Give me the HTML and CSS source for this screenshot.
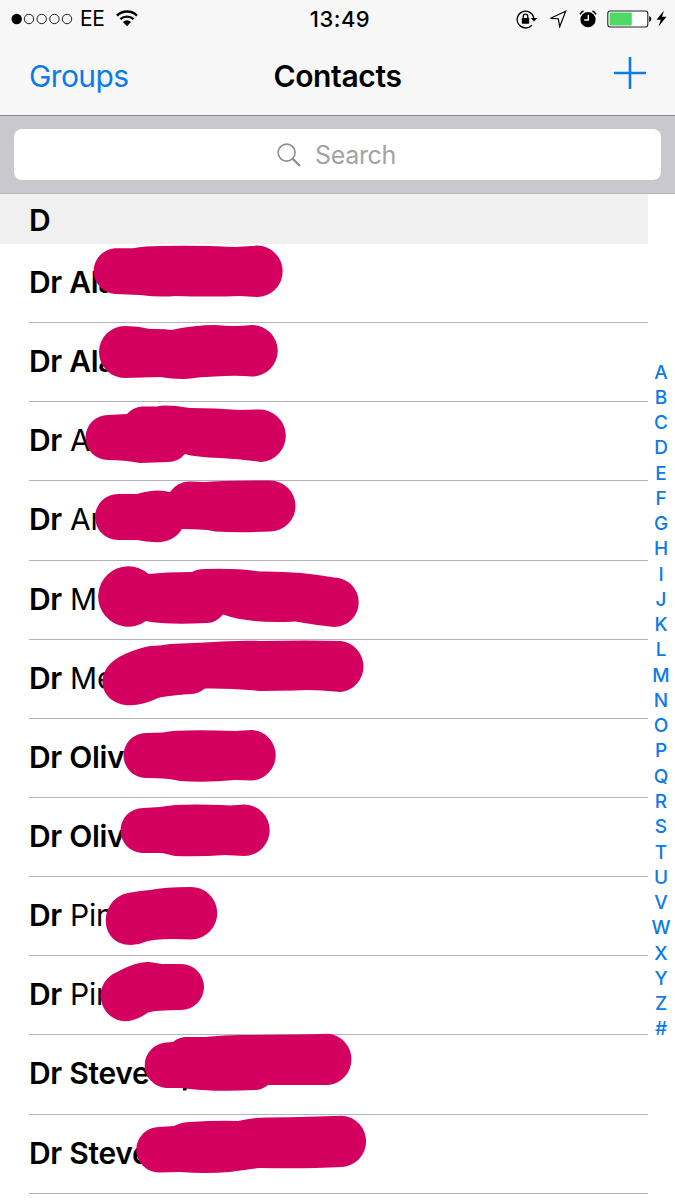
FILE: index.html
```html
<!DOCTYPE html>
<html lang="en">
<head>
    <meta charset="UTF-8">
    <meta name="viewport" content="width=device-width, initial-scale=1.0">
    <title>Contacts</title>
    <link rel="stylesheet" href="styles.css">
</head>
<body>
<div class="phone">

    <!-- Status bar -->
    <div class="status-bar">
        <div class="status-left">
            <svg class="signal" width="62" height="12" viewBox="0 0 62 12">
                <circle cx="5.7" cy="6" r="5.2" fill="#000"/>
                <g fill="none" stroke="#222" stroke-width="1">
                    <circle cx="18" cy="6" r="4.7"/>
                    <circle cx="30.7" cy="6" r="4.7"/>
                    <circle cx="43.4" cy="6" r="4.7"/>
                    <circle cx="56" cy="6" r="4.7"/>
                </g>
            </svg>
            <span class="carrier">EE</span>
            <svg class="wifi" width="22" height="17" viewBox="0 0 22 17">
                <g fill="none" stroke="#000" stroke-width="2.3">
                    <path d="M1 5.6A14.3 14.3 0 0 1 21 5.6"/>
                    <path d="M4.4 9.2A9.5 9.5 0 0 1 17.6 9.2"/>
                </g>
                <path d="M7 12A5.7 5.7 0 0 1 15 12L11 16.3Z"/>
            </svg>
        </div>
        <span class="time">13:49</span>
        <div class="status-right">
            <svg width="22" height="20" viewBox="0 0 22 20">
                <path d="M15.8 16.2A8.4 8.4 0 1 1 17.8 9" fill="none" stroke="#000" stroke-width="1.3"/>
                <path d="M14.7 9H21.3L18 12.6Z"/>
                <rect x="5.8" y="9" width="7.4" height="5.7" rx=".6"/>
                <path d="M7.2 9.5V7.5A2.3 2.4 0 0 1 11.8 7.5V9.5" fill="none" stroke="#000" stroke-width="1.3"/>
            </svg>
            <svg class="location" width="18" height="18" viewBox="0 0 18 18">
                <path d="M16.7 1.2L1.5 8.3L9.3 8.7L10.7 16.8Z" fill="none" stroke="#000" stroke-width="1.2"/>
            </svg>
            <svg class="alarm" width="18" height="18" viewBox="0 0 18 18">
                <circle cx="9" cy="9.7" r="7.6"/>
                <path d="M1 4.3A7 7 0 0 1 4.5 1M17 4.3A7 7 0 0 0 13.5 1" fill="none" stroke="#000" stroke-width="1.5"/>
                <path d="M9.3 5V10H5.2" fill="none" stroke="#fff" stroke-width="1.4"/>
            </svg>
            <svg class="battery" width="45" height="18" viewBox="0 0 45 18">
                <rect x=".8" y="1" width="40" height="16" rx="2.5" fill="#fff" stroke="#222" stroke-width="1.1"/>
                <rect x="2.6" y="2.6" width="22.2" height="12.8" rx="1" fill="#4cd964"/>
                <path d="M42.2 6A3.2 3.2 0 0 1 42.2 12Z"/>
            </svg>
            <svg class="bolt" width="11" height="17" viewBox="0 0 11 17">
                <path d="M8 .5L.5 9.7H4.8L2.5 16.5L10.5 6.7H6Z"/>
            </svg>
        </div>
    </div>

    <!-- Navigation bar -->
    <div class="nav-bar">
        <a class="nav-link">Groups</a>
        <h1>Contacts</h1>
        <svg class="add" width="32" height="32" viewBox="0 0 32 32">
            <path d="M0 16H32M16 0V32" stroke="#0b7bea" stroke-width="2.6"/>
        </svg>
    </div>

    <!-- Search -->
    <div class="search-bar">
        <div class="search-field">
            <svg width="24" height="24" viewBox="0 0 24 24" fill="none" stroke="#8e8e93">
                <circle cx="9.6" cy="9.6" r="8.5" stroke-width="1.6"/>
                <path d="M15.6 15.6L23 23" stroke-width="2.3"/>
            </svg>
            <span>Search</span>
        </div>
    </div>

    <!-- Contact list -->
    <div class="list">
        <div class="contacts">
            <h2>D</h2>
            <ul>
                <li><b>Dr Ala</b></li>
                <li><b>Dr Ala</b></li>
                <li><b>Dr</b> A</li>
                <li><b>Dr</b> An</li>
                <li><b>Dr</b> M</li>
                <li><b>Dr</b> Me</li>
                <li><b>Dr Oliv</b></li>
                <li><b>Dr Oliv</b></li>
                <li><b>Dr</b> Pin</li>
                <li><b>Dr</b> Pin</li>
                <li><b>Dr Steve</b></li>
                <li><b>Dr Steve</b></li>
            </ul>
        </div>
        <div class="index">
            <span>A</span><span>B</span><span>C</span><span>D</span><span>E</span><span>F</span><span>G</span>
            <span>H</span><span>I</span><span>J</span><span>K</span><span>L</span><span>M</span><span>N</span>
            <span>O</span><span>P</span><span>Q</span><span>R</span><span>S</span><span>T</span><span>U</span>
            <span>V</span><span>W</span><span>X</span><span>Y</span><span>Z</span><span>#</span>
        </div>
    </div>

    <!-- Marker strokes over the surnames -->
    <svg class="marker" width="675" height="1200" viewBox="0 0 675 1200">
        <path d="M115 248.3L133 248.3Q145 246 160 246Q200 245.3 235 247L257 245.6A25.7 25.7 0 0 1 257 297L240 296Q210 297 175 296Q160 297.5 140 295L115 294A22.9 22.9 0 0 1 115 248.3Z"/>
        <path d="M125 326Q138 326 150 329Q165 328.5 171 330Q195 325 215 325Q235 327 252 325A25.7 25.7 0 0 1 252 376.5Q235 375 215 376.5Q200 377 188 378.7Q176 379.5 160 377L125 378A26 26 0 0 1 125 326Z"/>
        <path d="M108 415L127 414Q133 407 142 406.5L157 406.5Q165 404 190 408Q215 408 240 410L258 409.5A26 26 0 0 1 261 462Q240 459 220 458Q195 457 185 454Q178 462 168 462L140 463Q125 460 108 460A22.5 22.5 0 0 1 108 415Z"/>
        <path d="M118 494H137Q156 488 170 492Q178 481 190 481.5L205 482Q220 480.5 270 480.5A25.5 25.5 0 0 1 270 531.5Q240 533 215 531.5Q208 529 182 529Q174 542 157 542.3Q146 542 137 540L118 540A23 23 0 0 1 118 494Z"/>
        <path d="M148.5 574Q165 572 192 572Q197 569 205 569Q238 568 260 571.5Q300 571 334 577.5A24.6 24.6 0 0 1 334 627Q315 625 295 621.5Q250 624 223 614.5Q216 623 207 623Q165 625 146 621A30.2 30.2 0 1 1 148.5 574Z"/>
        <path d="M125 654Q139 648 150 646Q160 646 170 644L205 642.5Q240 640 260 641Q310 640 341 641A25.7 25.7 0 0 1 341 692Q310 689 295 690.5L260 691Q230 688 205 688.5Q198 694 190 694Q165 696 158 698Q144 705 130 705.3C99 705 90 669 125 654Z"/>
        <path d="M146 733L163 732.5Q180 729 235 731L252 730A25.3 25.3 0 0 1 252 780.5L235 780Q205 783 180 781Q170 778 146 778A22.5 22.5 0 0 1 146 733Z"/>
        <path d="M143 808L160 807Q180 803 230 805.5L244 804.5A25.7 25.7 0 0 1 244 856L225 855Q200 857 175 856L162 853L143 853A22.5 22.5 0 0 1 143 808Z"/>
        <path d="M128 893Q138 891 150 890Q165 887 190 887A26 26 0 0 1 192 939.5Q155 938 145 942Q138 945 131 945C98 945 98 899 128 893Z"/>
        <path d="M117 972Q137 961 149 962L162 964L181 964A23 23 0 0 1 181 1010Q155 1010 148 1012.5Q136 1021 125 1021.3C99 1020 90 984 117 972Z"/>
        <path class="ink" d="M183 1087H188L186 1090.5H183Z"/>
        <path d="M166 1042.5L173 1042Q179 1037 187 1037H205Q225 1035 240 1035Q290 1035 328 1033.8A25.7 25.7 0 0 1 328 1085L268 1085Q262 1090 255 1090Q215 1092 190 1089L182 1088H166A22.8 22.8 0 0 1 166 1042.5Z"/>
        <path d="M159 1127L174 1126Q182 1122 190 1122Q220 1120 238 1121Q255 1117 270 1117.5Q310 1117 342 1115.7A25.7 25.7 0 0 1 342 1167Q305 1169 260 1168Q235 1171 230 1172Q205 1174 180 1172L159 1172.5A22.7 22.7 0 0 1 159 1127Z"/>
    </svg>

</div>
</body>
</html>
```

FILE: styles.css
```css
* {
    box-sizing: border-box;
    margin: 0;
    padding: 0;
}
body {
    font-family: Inter, "Liberation Sans", sans-serif;
    background-color: #fff;
    color: #000;
}
.phone {
    position: relative;
    width: 675px;
    height: 1200px;
    overflow: hidden;
}
.phone svg {
    display: block;
    flex: none;
}
.status-bar {
    display: grid;
    grid-template-columns: 1fr auto 1fr;
    align-items: center;
    height: 36px;
    padding: 0 8px 0 11px;
    background-color: #f7f7f7;
}
.status-left,
.status-right {
    display: flex;
    align-items: center;
}
.status-right {
    justify-content: flex-end;
}
.carrier {
    margin-left: 7px;
    font-size: 21px;
    letter-spacing: -0.4px;
    line-height: 37px;
}
.wifi {
    margin-left: 12px;
}
.time {
    font-size: 22px;
    font-weight: 500;
    letter-spacing: 0.5px;
    padding-left: 2px;
}
.location {
    margin-left: 11px;
}
.alarm {
    margin-left: 12px;
}
.battery {
    margin-left: 10px;
}
.bolt {
    margin-left: 4px;
}
.nav-bar {
    display: grid;
    grid-template-columns: 1fr auto 1fr;
    align-items: center;
    height: 80px;
    padding: 0 29px;
    border-bottom: 1px solid #8b8b8f;
    background-color: #f7f7f7;
}
.nav-link {
    color: #0b7bea;
    font-size: 30px;
    letter-spacing: -0.6px;
}
.nav-bar h1 {
    font-size: 30px;
    font-weight: 600;
    letter-spacing: -0.35px;
}
.add {
    justify-self: end;
    margin-top: -5px;
}
.search-bar {
    height: 78px;
    padding: 13px 14px;
    border-bottom: 1px solid #b5b5ba;
    background-color: #c9c8ce;
}
.search-field {
    display: flex;
    align-items: center;
    justify-content: center;
    gap: 14px;
    height: 51px;
    padding-right: 2px;
    border-radius: 8px;
    background-color: #fff;
    color: #a3a3a7;
    font-size: 25px;
    letter-spacing: -0.3px;
}
.list {
    display: flex;
}
.contacts {
    width: 648px;
}
.contacts h2 {
    height: 50px;
    padding-left: 29px;
    background-color: #f0f0f0;
    font-size: 30px;
    font-weight: 600;
    line-height: 53px;
}
.contacts ul {
    margin-left: 29px;
    list-style-type: none;
}
.contacts li {
    height: 79.15px;
    border-bottom: 1px solid #b4b4b8;
    font-size: 30px;
    font-weight: 400;
    letter-spacing: -0.3px;
    line-height: 77px;
}
.contacts b {
    font-weight: 600;
}
.index {
    display: flex;
    flex-direction: column;
    align-items: center;
    width: 26px;
    padding-top: 165.5px;
    color: #0b7bea;
    font-size: 19px;
    font-weight: 550;
}
.index span {
    height: 25.27px;
    line-height: 25.27px;
}
.marker {
    position: absolute;
    left: 0;
    top: 0;
    fill: #d3005f;
}
.marker .ink {
    fill: #000;
}
```
